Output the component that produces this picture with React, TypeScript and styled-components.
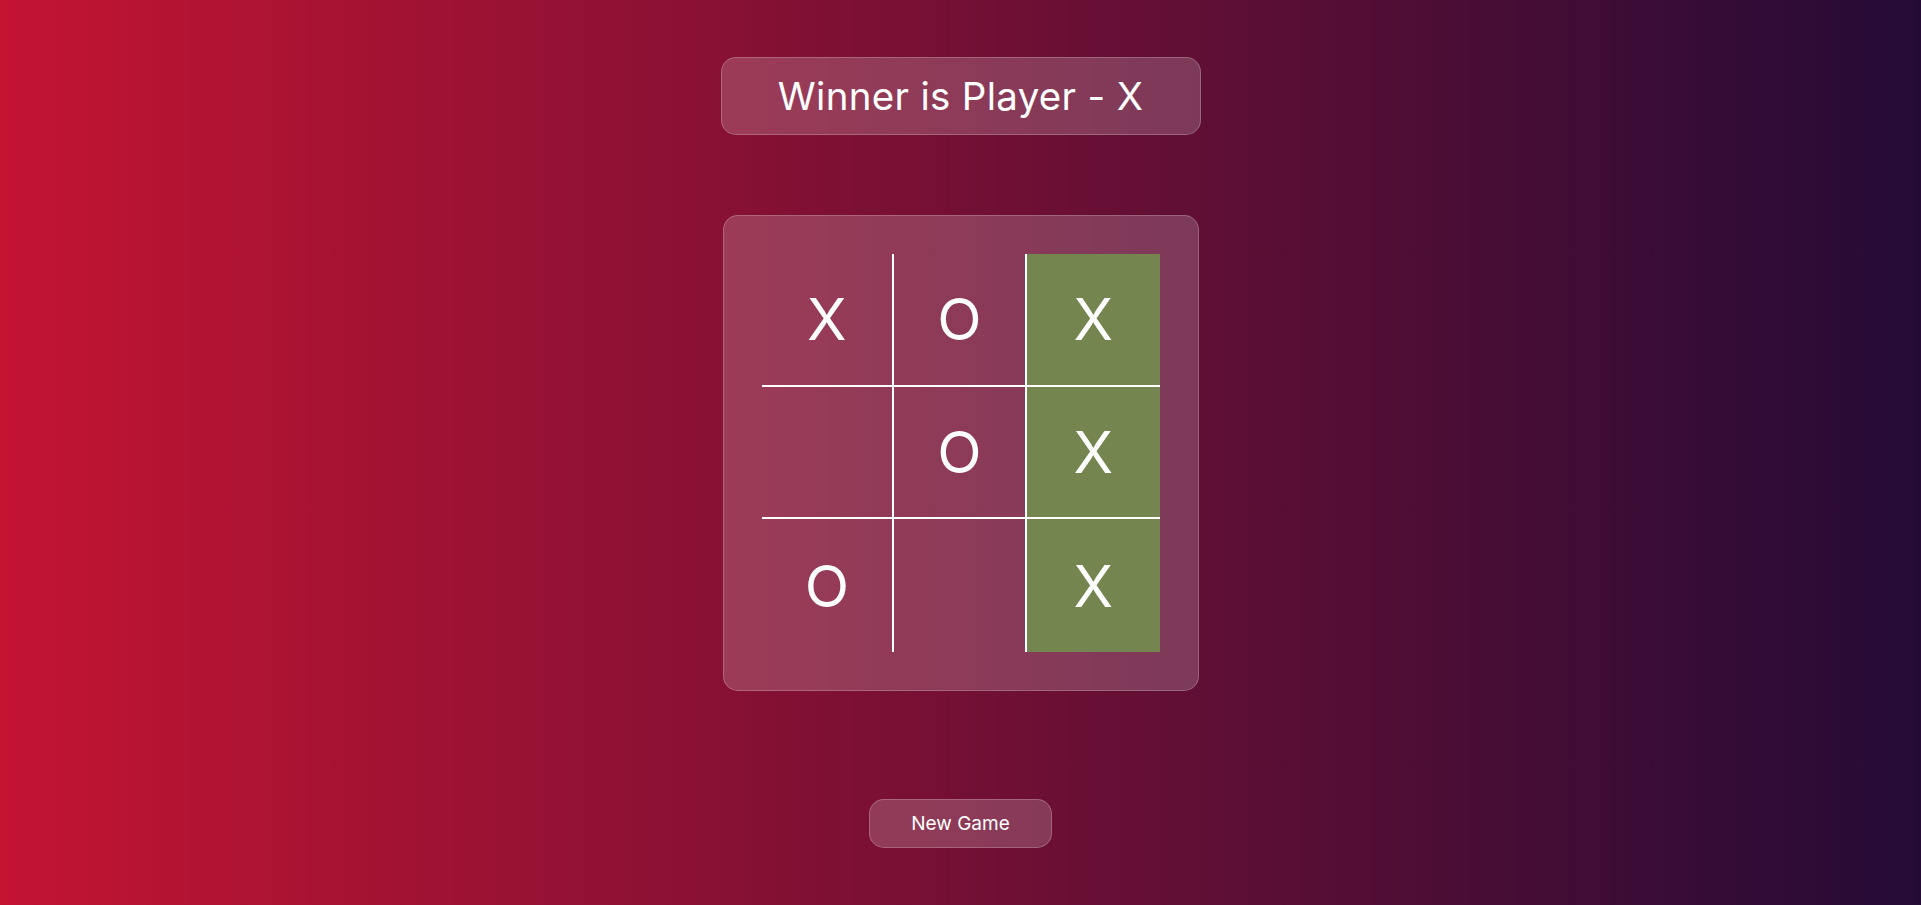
import styled, { createGlobalStyle } from 'styled-components';

const GlobalStyle = createGlobalStyle`
	* {
		box-sizing: border-box;
	}
	body {
		margin: 0;
		font-family: 'Inter', 'Noto Sans', sans-serif;
		color: #ffffff;
	}
`;

const Page = styled.main`
	min-height: 905px;
	background: linear-gradient(to right, #c31432, #240b36);
	display: flex;
	flex-direction: column;
	align-items: center;
	padding-top: 57px;
`;

const Glass = styled.div`
	background: rgba(255, 255, 255, 0.18);
	border: 1px solid rgba(255, 255, 255, 0.22);
	border-radius: 15px;
`;

const Heading = styled(Glass)`
	width: 480px;
	height: 78px;
	display: flex;
	align-items: center;
	justify-content: center;
	font-size: 38.5px;
	font-weight: 400;
	letter-spacing: 0.3px;
`;

const Board = styled(Glass)`
	margin-top: 80px;
	width: 476px;
	height: 476px;
	padding: 38px;
`;

const Grid = styled.div`
	display: grid;
	grid-template-columns: repeat(3, 1fr);
	grid-template-rows: repeat(3, 1fr);
	width: 398px;
	height: 398px;
`;

const Cell = styled.button<{ $right: boolean; $bottom: boolean; $win: boolean }>`
	all: unset;
	display: flex;
	align-items: center;
	justify-content: center;
	font-family: 'Inter', 'Noto Sans', sans-serif;
	font-size: 58px;
	font-weight: 400;
	color: #ffffff;
	cursor: pointer;
	background: ${(p) => (p.$win ? '#748550' : 'transparent')};
	border-right: ${(p) => (p.$right ? '2px solid #ffffff' : 'none')};
	border-bottom: ${(p) => (p.$bottom ? '2px solid #ffffff' : 'none')};
`;

const NewGame = styled(Glass).attrs({ as: 'button' })`
	margin-top: 108px;
	width: 183px;
	height: 49px;
	color: #ffffff;
	font-family: 'Inter', 'Noto Sans', sans-serif;
	font-size: 19px;
	cursor: pointer;
`;

const board = ['X', 'O', 'X', '', 'O', 'X', 'O', '', 'X'];
const winLine = [2, 5, 8];

export default function App() {
	return (
		<>
			<GlobalStyle />
			<Page>
				<Heading>Winner is Player - X</Heading>
				<Board>
					<Grid>
						{board.map((v, i) => (
							<Cell
								key={i}
								$right={i % 3 < 2}
								$bottom={i < 6}
								$win={winLine.includes(i)}
							>
								{v}
							</Cell>
						))}
					</Grid>
				</Board>
				<NewGame>New Game</NewGame>
			</Page>
		</>
	);
}
